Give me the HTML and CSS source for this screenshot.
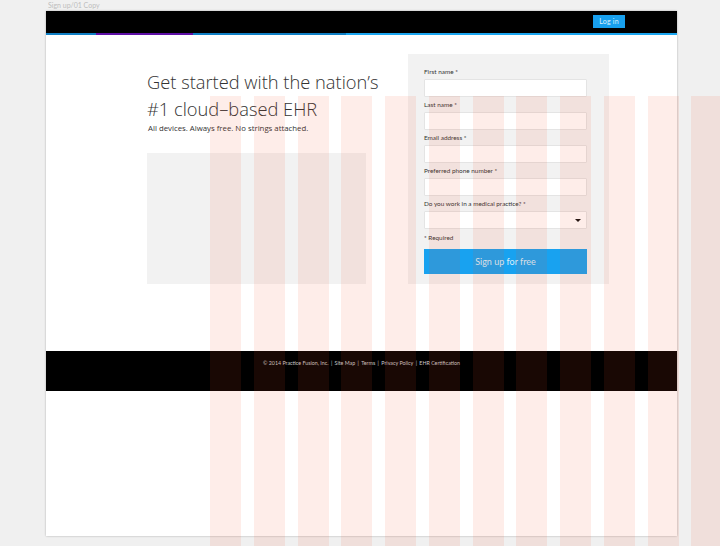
FILE: index.html
```html
<!DOCTYPE html>
<html lang="en">
<head>
<meta charset="utf-8">
<title>Sign up</title>
<link rel="stylesheet" href="styles.css">
</head>
<body>
<div class="canvas">
  <div class="artboard-name">Sign up/01 Copy</div>
  <div class="artboard">
    <header class="topbar">
      <a class="login" href="#">Log in</a>
    </header>
    <div class="strip">
      <span class="seg seg-a"></span>
      <span class="seg seg-b"></span>
      <span class="seg seg-c"></span>
      <span class="seg seg-d"></span>
    </div>
    <main class="main">
      <section class="intro">
        <h1 class="headline">Get started with the nation’s<br>#1 cloud–based EHR</h1>
        <p class="sub">All devices. Always free. No strings attached.</p>
        <div class="media"></div>
      </section>
      <form class="panel">
        <label class="field"><span class="label">First name *</span><input class="input" type="text"></label>
        <label class="field"><span class="label">Last name *</span><input class="input" type="text"></label>
        <label class="field"><span class="label">Email address *</span><input class="input" type="text"></label>
        <label class="field"><span class="label">Preferred phone number *</span><input class="input" type="text"></label>
        <label class="field"><span class="label">Do you work in a medical practice? *</span>
          <span class="input select"><span class="caret"></span></span>
        </label>
        <p class="required">* Required</p>
        <button class="submit" type="button">Sign up for free</button>
      </form>
    </main>
    <footer class="footer">
      <span>© 2014 Practice Fusion, Inc.</span><span class="sep">|</span><span>Site Map</span><span class="sep">|</span><span>Terms</span><span class="sep">|</span><span>Privacy Policy</span><span class="sep">|</span><span>EHR Certification</span>
    </footer>
  </div>
  <div class="grid-overlay">
    <i></i><i></i><i></i><i></i><i></i><i></i><i></i><i></i><i></i><i></i><i></i><i></i>
  </div>
</div>
</body>
</html>
```
FILE: styles.css
```css
* { box-sizing: border-box; }
html, body { margin: 0; height: 100%; }
body {
  background: #f0f0f0;
  font-family: "Lato", "Open Sans", "Liberation Sans", sans-serif;
  overflow: hidden;
}
.canvas {
  position: relative;
  width: 720px;
  height: 546px;
  overflow: hidden;
  padding: 0 43px 0 46px;
}
.artboard-name {
  height: 11px;
  padding: 1px 0 0 2px;
  font-size: 7px;
  line-height: 8px;
  color: #bdbdbd;
}
.artboard {
  width: 631px;
  height: 525px;
  background: #fff;
  box-shadow: 0 0 2px rgba(0, 0, 0, .28);
}
.topbar {
  height: 22px;
  background: #000;
  display: flex;
  justify-content: flex-end;
  align-items: flex-start;
  padding: 4px 52px 0 0;
}
.login {
  width: 32px;
  height: 13px;
  background: #18a0ee;
  color: #dff2fc;
  font-size: 7px;
  line-height: 13px;
  text-align: center;
  text-decoration: none;
  letter-spacing: .2px;
}
.strip { display: flex; height: 2px; }
.seg { display: block; height: 2px; }
.seg-a { width: 50px; background: #0f7fc4; }
.seg-b { width: 97px; background: #5e0fa6; }
.seg-c { width: 153px; background: #0f7fc4; }
.seg-d { flex: 1; background: #1aa5ef; }
.main {
  display: flex;
  align-items: flex-start;
  height: 316px;
  padding: 19px 0 0 101px;
}
.intro { width: 219px; margin-right: 42px; flex: none; }
.headline {
  margin: 14px 0 0;
  font-family: "Open Sans", sans-serif;
  font-size: 18.3px;
  line-height: 27px;
  font-weight: 300;
  color: #333;
  white-space: nowrap;
}
.sub {
  margin: 0 0 0 1px;
  font-family: "Open Sans", sans-serif;
  font-size: 7.8px;
  line-height: 12px;
  color: #333;
  font-weight: 500;
  white-space: nowrap;
}
.media {
  margin-top: 19px;
  height: 131px;
  background: #f2f2f2;
}
.panel {
  width: 201px;
  height: 230px;
  background: #f2f2f2;
  padding: 13px 22px 0 16px;
  flex: none;
}
.field { display: block; height: 33px; }
.label {
  display: block;
  height: 12px;
  font-size: 6.4px;
  line-height: 9px;
  color: #333;
  white-space: nowrap;
}
.input {
  display: block;
  width: 163px;
  height: 18px;
  margin: 0;
  padding: 0;
  background: #fff;
  border: 1px solid #e4e4e4;
  border-radius: 1px;
}
.select {
  display: flex;
  align-items: center;
  justify-content: flex-end;
  padding-right: 5px;
}
.caret {
  width: 0;
  height: 0;
  border-left: 3px solid transparent;
  border-right: 3px solid transparent;
  border-top: 3px solid #111;
}
.required {
  margin: 1px 0 0;
  height: 10px;
  font-size: 6.4px;
  line-height: 9px;
  color: #333;
}
.submit {
  display: block;
  width: 163px;
  height: 25px;
  margin: 6px 0 0;
  padding: 0;
  border: 0;
  background: #18a2f0;
  color: #d8eefb;
  font-family: inherit;
  font-size: 9px;
  text-align: center;
}
.footer {
  height: 40px;
  background: #000;
  display: flex;
  justify-content: flex-start;
  align-items: center;
  padding: 0 0 16px 217px;
  font-size: 5.3px;
  color: #c9c9c9;
  white-space: nowrap;
}
.sep { margin: 0 2.4px; }
.grid-overlay {
  position: absolute;
  left: 210px;
  top: 96px;
  bottom: 0;
  display: flex;
  gap: 12.75px;
  pointer-events: none;
}
.grid-overlay i {
  display: block;
  width: 31px;
  background: rgba(246, 80, 40, .1);
}
```
